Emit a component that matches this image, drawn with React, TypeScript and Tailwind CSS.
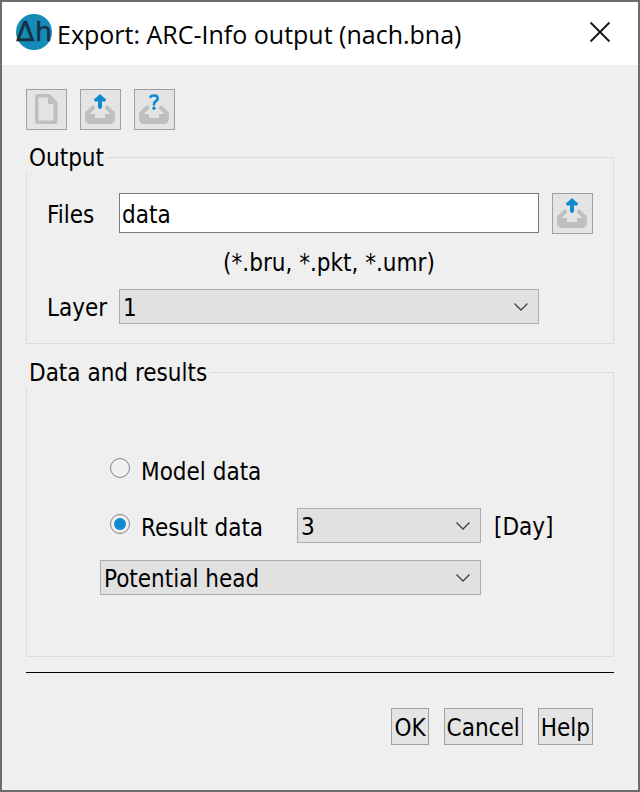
import React, { useState } from "react";

type DataSource = "model" | "result";

const Logo: React.FC = () => (
  <svg width="36" height="36" viewBox="0 0 36 36" className="shrink-0 overflow-visible" aria-hidden="true">
    <circle cx="18" cy="18" r="18" fill="#158bb8" />
    <g fill="#17303f" stroke="#17303f" strokeWidth="0.4" fontSize="27" fontFamily="DejaVu Sans, sans-serif">
      <text x="0" y="27">Δ</text>
      <text x="19" y="27">h</text>
    </g>
  </svg>
);

const NewFileIcon: React.FC = () => (
  <svg width="39" height="39" viewBox="0 0 39 39" aria-hidden="true">
    <path
      fill="#bfbfbf"
      fillRule="evenodd"
      d="M10.500 4H22.500L30.500 12V32Q30.500 34 28.500 34H10Q8 34 8 32V6.500Q8 4 10.500 4ZM11.500 7.500V30.500H26.500V14H21V7.500Z"
    />
  </svg>
);

const Tray: React.FC = () => (
  <path
    fill="#bfbfbf"
    fillRule="evenodd"
    d="M12 15L14 17V19L8.500 24H13Q14 24 14 25.500V28H24V25.500Q24 24 25 24H29.500L24 19V17L26 15L33 21.500Q34 23 34 25V28Q34 34 28 34H10Q4 34 4 28V25Q4 23 5 21.500Z"
  />
);

const UploadIcon: React.FC = () => (
  <svg width="39" height="39" viewBox="0 0 39 39" aria-hidden="true">
    <Tray />
    <path
      fill="#128ad2"
      d="M19 4L25 9.500Q25 11.500 23.500 11.500H21V17Q21 19 19 19Q17 19 17 17V11.500H14.500Q13 11.500 13 9.500Z"
    />
  </svg>
);

const QueryIcon: React.FC = () => (
  <svg width="39" height="39" viewBox="0 0 39 39" aria-hidden="true">
    <Tray />
    <path
      d="M15.500 6.700Q17 5.500 19.300 5.500Q22.700 5.500 22.700 8.500Q22.700 10 20.800 11.200Q19 12.300 19 14.500"
      fill="none"
      stroke="#128ad2"
      strokeWidth="2.700"
      strokeLinecap="round"
    />
    <circle cx="19" cy="18.200" r="1.700" fill="#128ad2" />
  </svg>
);

interface IconButtonProps {
  label: string;
  disabled?: boolean;
  children: React.ReactNode;
}

const IconButton: React.FC<IconButtonProps> = ({ label, disabled, children }) => (
  <button
    type="button"
    aria-label={label}
    disabled={disabled}
    className="size-[41px] shrink-0 border border-[#a0a0a0] bg-[#e4e4e4]"
  >
    {children}
  </button>
);

interface SelectBoxProps {
  id: string;
  label?: string;
  options: string[];
  className: string;
}

const SelectBox: React.FC<SelectBoxProps> = ({ id, label, options, className }) => (
  <div className={`relative ${className}`}>
    <select
      id={id}
      aria-label={label}
      className="block h-[35px] w-full appearance-none border border-[#adadad] bg-[#e1e1e1] pl-[3px] pr-9 pt-[2px] outline-none"
    >
      {options.map((option) => (
        <option key={option}>{option}</option>
      ))}
    </select>
    <svg
      width="14"
      height="8"
      viewBox="0 0 14 8"
      className="pointer-events-none absolute right-[11px] top-[14px]"
      aria-hidden="true"
    >
      <path d="M0.500 0.500L7 7L13.500 0.500" fill="none" stroke="#404040" strokeWidth="1.300" />
    </svg>
  </div>
);

interface RadioProps {
  id: string;
  label: string;
  checked: boolean;
  onChange: () => void;
}

const Radio: React.FC<RadioProps> = ({ id, label, checked, onChange }) => (
  <div className="flex w-[187px] shrink-0 items-center">
    <input
      type="radio"
      id={id}
      name="source"
      checked={checked}
      onChange={onChange}
      className="mb-1 mr-[11px] size-5 shrink-0 appearance-none rounded-full border border-[#808080] p-[3px] checked:bg-[#128ad2] checked:bg-clip-content"
    />
    <label htmlFor={id} className="-mb-[2px] pt-[2px]">{label}</label>
  </div>
);

const App: React.FC = () => {
  const [fileName, setFileName] = useState("data");
  const [source, setSource] = useState<DataSource>("result");

  return (
    <div className="flex min-h-screen flex-col border-2 border-[#6d6d6d] bg-[#efefef] font-['DejaVu_Sans_Condensed','Noto_Sans',sans-serif] text-[24px] leading-[30px] text-black">
      <header className="flex h-[63px] items-center bg-white pb-[3px] pl-[14px] pr-[27px]">
        <Logo />
        <h1 className="ml-[5px] flex-1 pt-1 font-['Open_Sans',sans-serif] text-[25px]">
          Export: ARC-Info output (nach.bna)
        </h1>
        <button type="button" aria-label="Close">
          <svg width="22" height="22" viewBox="0 0 22 22" aria-hidden="true">
            <path d="M1.500 1.500L20.500 20.500M20.500 1.500L1.500 20.500" stroke="#111" strokeWidth="1.800" />
          </svg>
        </button>
      </header>

      <main className="flex flex-1 flex-col px-6 pt-6">
        <div className="flex gap-[13px]">
          <IconButton label="New" disabled>
            <NewFileIcon />
          </IconButton>
          <IconButton label="Save">
            <UploadIcon />
          </IconButton>
          <IconButton label="Save as">
            <QueryIcon />
          </IconButton>
        </div>

        <fieldset className="mt-[11px] min-w-0 border border-[#dcdcdc] pb-[19px] pl-5 pr-5">
          <legend className="-ml-[21px] bg-[#efefef] px-[3px] pt-[2px]">Output</legend>
          <div className="mt-5 flex items-start">
            <label htmlFor="files" className="w-[72px] shrink-0 pt-[7px]">Files</label>
            <input
              id="files"
              type="text"
              value={fileName}
              onChange={(e) => setFileName(e.target.value)}
              className="h-10 min-w-0 flex-1 border border-[#7a7a7a] bg-white px-[2px] pt-1 outline-none"
            />
            <div className="ml-[13px] flex">
              <IconButton label="Choose file">
                <UploadIcon />
              </IconButton>
            </div>
          </div>
          <p className="ml-[72px] mr-[54px] mt-[14px] text-center">(*.bru, *.pkt, *.umr)</p>
          <div className="mr-[54px] mt-[11px] flex items-center">
            <label htmlFor="layer" className="w-[72px] shrink-0 pt-[2px]">Layer</label>
            <SelectBox id="layer" options={["1", "2", "3"]} className="min-w-0 flex-1" />
          </div>
        </fieldset>

        <fieldset className="mt-3 min-w-0 border border-[#dcdcdc] pb-[61px] pl-[73px] pr-5">
          <legend className="-ml-[74px] bg-[#efefef] px-[3px] pt-[2px]">Data and results</legend>
          <div className="mt-[67px] pl-[10px]">
            <Radio
              id="model"
              label="Model data"
              checked={source === "model"}
              onChange={() => setSource("model")}
            />
          </div>
          <div className="mt-[23px] flex items-center pl-[10px]">
            <Radio
              id="result"
              label="Result data"
              checked={source === "result"}
              onChange={() => setSource("result")}
            />
            <SelectBox id="day" label="Day" options={["3", "2", "1"]} className="min-w-0 flex-1" />
            <span className="w-[112px] shrink-0 pl-[13px] pt-[2px]">[Day]</span>
          </div>
          <div className="mr-[112px] mt-[17px] flex">
            <SelectBox
              id="quantity"
              label="Result quantity"
              options={["Potential head", "Saturation"]}
              className="min-w-0 flex-1"
            />
          </div>
        </fieldset>

        <hr className="mt-[15px] border-black" />

        <div className="mt-[35px] flex justify-end gap-[15px] pb-11 pr-[21px]">
          {["OK", "Cancel", "Help"].map((name) => (
            <button
              key={name}
              type="button"
              className="h-[37px] border border-[#a0a0a0] bg-[#e4e4e4] px-[2px] pt-[2px]"
            >
              {name}
            </button>
          ))}
        </div>
      </main>
    </div>
  );
};

export default App;
